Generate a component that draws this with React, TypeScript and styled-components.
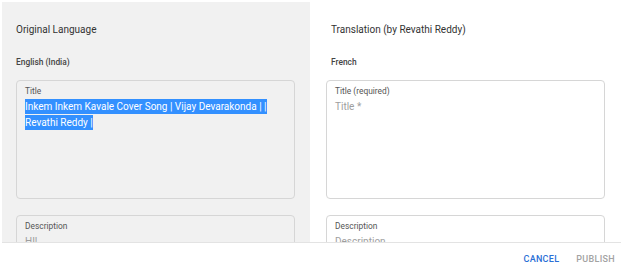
import styled, { createGlobalStyle } from 'styled-components';

const GlobalStyle = createGlobalStyle`
  html, body {
    margin: 0;
    padding: 0;
    background: #ffffff;
  }
  body {
    font-family: Roboto, 'Liberation Sans', sans-serif;
  }
`;

const Dialog = styled.div`
  width: 628px;
  height: 274px;
  display: flex;
  flex-direction: column;
  background: #ffffff;
  overflow: hidden;
`;

const Columns = styled.div`
  height: 240px;
  margin: 2px 0 0 2px;
  display: grid;
  grid-template-columns: 308px 1fr;
  column-gap: 6px;
  overflow: hidden;
`;

const Column = styled.section<{ $shaded?: boolean; $pad: number }>`
  background: ${({ $shaded }) => ($shaded ? '#f1f1f1' : '#ffffff')};
  padding: 20px 0 0 ${({ $pad }) => $pad}px;
  display: flex;
  flex-direction: column;
`;

const Heading = styled.h2<{ $indent?: number }>`
  margin: 0 0 17px ${({ $indent }) => $indent ?? 0}px;
  font-size: 10px;
  line-height: 16px;
  font-weight: 400;
  color: #333333;
`;

const Language = styled.div<{ $indent?: number }>`
  margin: 0 0 11px ${({ $indent }) => $indent ?? 0}px;
  font-size: 8.4px;
  line-height: 14px;
  font-weight: 500;
  color: #444444;
`;

const Field = styled.div<{ $shaded?: boolean; $height: number }>`
  box-sizing: border-box;
  width: 279px;
  height: ${({ $height }) => $height}px;
  flex-shrink: 0;
  margin-bottom: 16px;
  padding: 4px 8px 0 8px;
  border: 1px solid #d6d6d6;
  border-radius: 4px;
  background: ${({ $shaded }) => ($shaded ? '#f1f1f1' : '#ffffff')};
`;

const FieldLabel = styled.div`
  font-size: 8.4px;
  line-height: 12px;
  color: #555555;
  margin-bottom: 2px;
`;

const FieldValue = styled.div<{ $muted?: boolean }>`
  font-size: 10px;
  line-height: 16px;
  color: ${({ $muted }) => ($muted ? '#9e9e9e' : '#333333')};
`;

const Selected = styled.span`
  background: #3390ff;
  color: #ffffff;
  padding: 2px 0;
  box-decoration-break: clone;
  -webkit-box-decoration-break: clone;
`;

const Footer = styled.footer`
  margin: 0 7px 0 2px;
  border-top: 1px solid #e3e3e3;
  flex: 1;
  display: flex;
  justify-content: flex-end;
  align-items: center;
  gap: 17px;
  padding-right: 6px;
`;

const Action = styled.button<{ $primary?: boolean }>`
  border: none;
  background: transparent;
  padding: 0;
  font-family: Roboto, 'Liberation Sans', sans-serif;
  font-size: 9px;
  font-weight: 500;
  letter-spacing: 0.3px;
  text-transform: uppercase;
  color: ${({ $primary }) => ($primary ? '#2a6fd6' : '#a3a3a3')};
  cursor: pointer;
`;

export default function App() {
  return (
    <>
      <GlobalStyle />
      <Dialog>
        <Columns>
          {/* Original language, read-only */}
          <Column $shaded $pad={14}>
            <Heading>Original Language</Heading>
            <Language>English (India)</Language>
            <Field $shaded $height={119}>
              <FieldLabel>Title</FieldLabel>
              <FieldValue>
                <Selected>
                  Inkem Inkem Kavale Cover Song | Vijay Devarakonda | | Revathi Reddy |
                </Selected>
              </FieldValue>
            </Field>
            <Field $shaded $height={70}>
              <FieldLabel>Description</FieldLabel>
              <FieldValue $muted>HI!</FieldValue>
            </Field>
          </Column>

          {/* Translation being edited */}
          <Column $pad={10}>
            <Heading $indent={5}>Translation (by Revathi Reddy)</Heading>
            <Language $indent={5}>French</Language>
            <Field $height={119}>
              <FieldLabel>Title (required)</FieldLabel>
              <FieldValue $muted>Title *</FieldValue>
            </Field>
            <Field $height={70}>
              <FieldLabel>Description</FieldLabel>
              <FieldValue $muted>Description</FieldValue>
            </Field>
          </Column>
        </Columns>

        <Footer>
          <Action $primary>Cancel</Action>
          <Action>Publish</Action>
        </Footer>
      </Dialog>
    </>
  );
}
